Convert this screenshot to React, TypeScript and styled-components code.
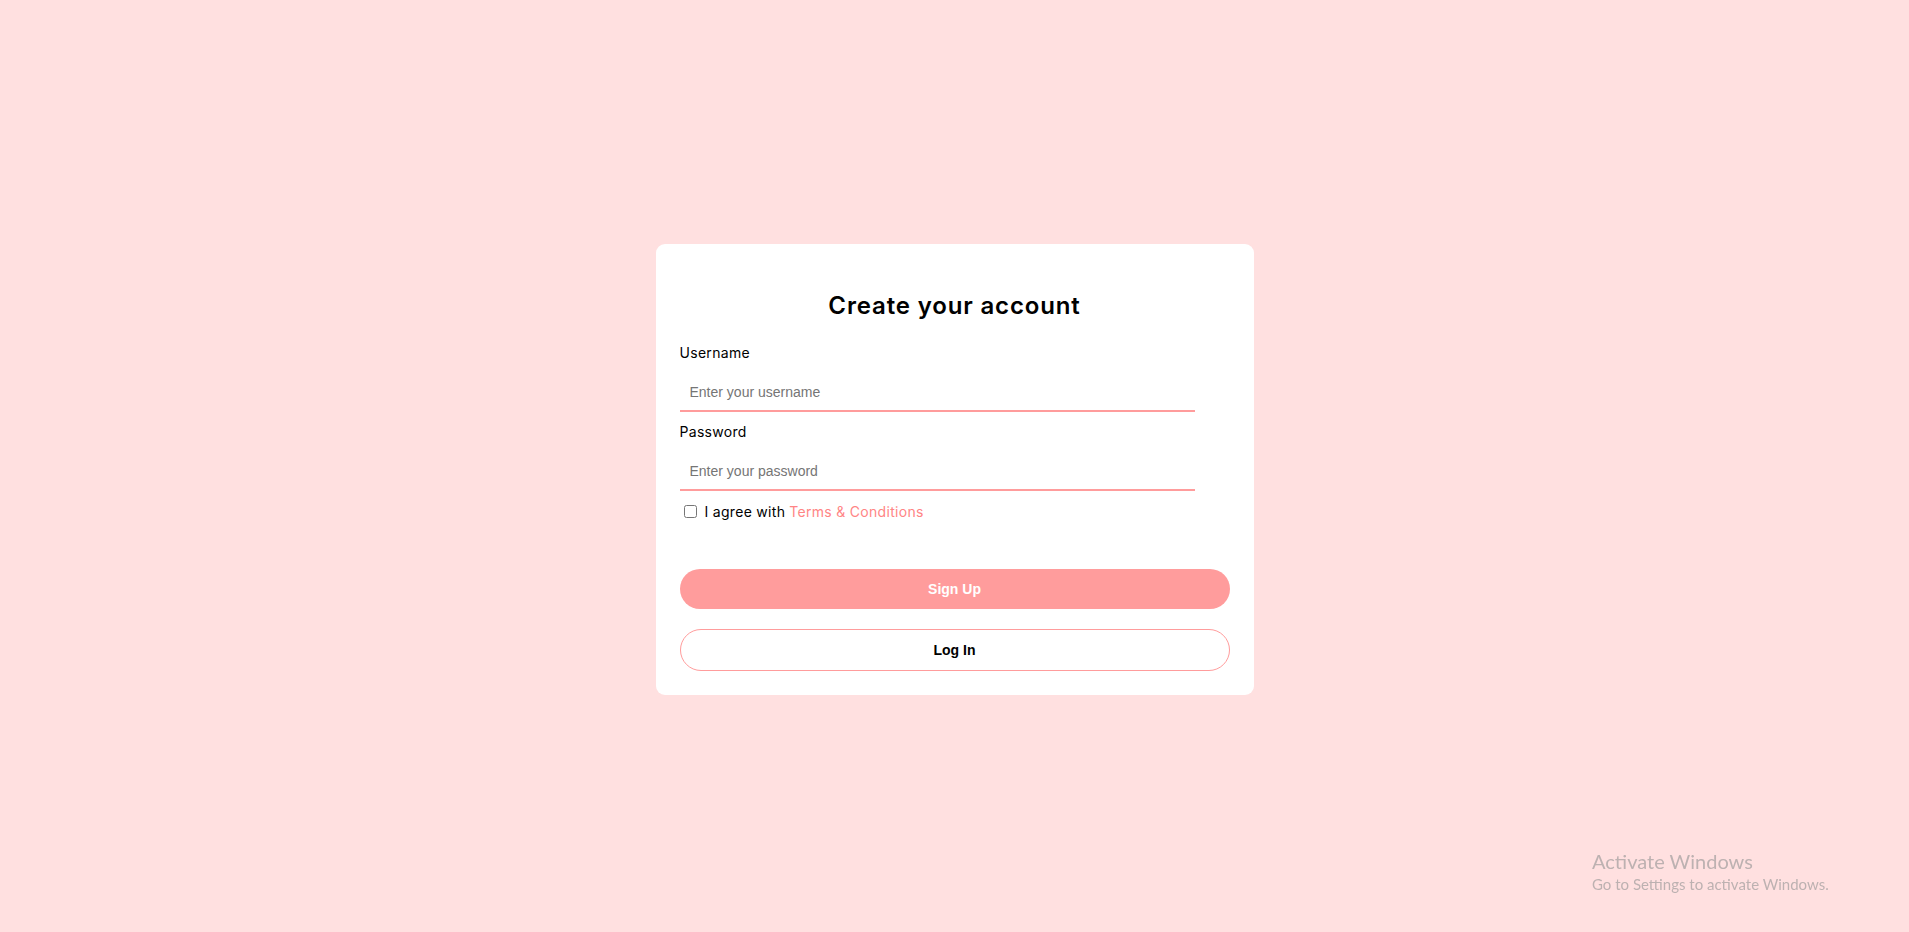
import React from "react";
import styled, { createGlobalStyle } from "styled-components";

const GlobalStyle = createGlobalStyle`
  * {
    box-sizing: border-box;
  }
  body {
    margin: 0;
    background-color: #ffe0e0;
    font-family: "Inter", "Noto Sans", sans-serif;
  }
`;

const Page = styled.div`
  min-height: 100vh;
  padding-top: 7px;
  display: flex;
  align-items: center;
  justify-content: center;
`;

const Card = styled.form`
  width: 598px;
  background-color: #fff;
  border-radius: 9px;
  padding: 24px;
  display: flex;
  flex-direction: column;
`;

const Title = styled.h2`
  margin: 20px 0 19px;
  font-size: 24px;
  line-height: 36px;
  font-weight: 600;
  letter-spacing: 0.85px;
  text-align: center;
  color: #000;
`;

const Field = styled.div`
  display: flex;
  flex-direction: column;
  margin-bottom: 10px;
`;

const Label = styled.label`
  font-size: 14px;
  line-height: 20px;
  letter-spacing: 0.3px;
  color: #000;
  margin-bottom: 11px;
`;

const Input = styled.input`
  width: 515px;
  height: 38px;
  padding: 0 10px;
  border: none;
  border-bottom: 2px solid #ff9c9c;
  outline: none;
  font-family: "Liberation Sans", Arial, sans-serif;
  font-size: 14px;
  color: #333;

  &::placeholder {
    color: #757575;
  }
`;

const AgreeRow = styled.label`
  display: flex;
  align-items: center;
  height: 20px;
  font-size: 14px;
  letter-spacing: 0.3px;
  color: #000;
  margin-bottom: 48px;
`;

const Checkbox = styled.input`
  width: 13px;
  height: 13px;
  margin: 0 8px 0 4px;
`;

const Link = styled.a`
  color: #ff8585;
  text-decoration: none;
  margin-left: 4px;
`;

const Button = styled.button<{ $outline?: boolean }>`
  width: 100%;
  height: ${(p) => (p.$outline ? "42px" : "40px")};
  border-radius: 21px;
  border: ${(p) => (p.$outline ? "1px solid #ff9c9c" : "none")};
  background-color: ${(p) => (p.$outline ? "#fff" : "#ff9c9c")};
  color: ${(p) => (p.$outline ? "#000" : "#fff")};
  font-family: "Liberation Sans", Arial, sans-serif;
  font-size: 14px;
  font-weight: 700;
  cursor: pointer;
  margin-top: ${(p) => (p.$outline ? "20px" : "0")};
`;

const Watermark = styled.div`
  position: fixed;
  left: 1592px;
  top: 848px;
  font-family: "Lato", "Noto Sans", sans-serif;
  color: #bdb1b1;
  pointer-events: none;
`;

const WatermarkTitle = styled.div`
  font-size: 20px;
  line-height: 26px;
`;

const WatermarkText = styled.div`
  font-size: 15px;
  line-height: 20px;
`;

export default function App() {
  return (
    <>
      <GlobalStyle />
      <Page>
        <Card onSubmit={(e) => e.preventDefault()}>
          <Title>Create your account</Title>
          <Field>
            <Label htmlFor="username">Username</Label>
            <Input id="username" type="text" placeholder="Enter your username" />
          </Field>
          <Field>
            <Label htmlFor="password">Password</Label>
            <Input id="password" type="password" placeholder="Enter your password" />
          </Field>
          <AgreeRow>
            <Checkbox type="checkbox" />
            I agree with<Link href="#">Terms &amp; Conditions</Link>
          </AgreeRow>
          <Button type="submit">Sign Up</Button>
          <Button type="button" $outline>
            Log In
          </Button>
        </Card>
      </Page>
      <Watermark>
        <WatermarkTitle>Activate Windows</WatermarkTitle>
        <WatermarkText>Go to Settings to activate Windows.</WatermarkText>
      </Watermark>
    </>
  );
}
